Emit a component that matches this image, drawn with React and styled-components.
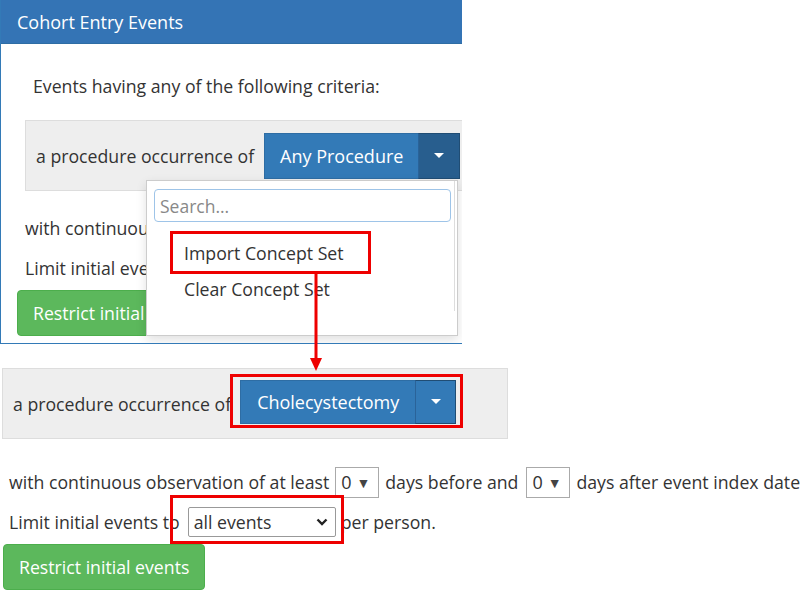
import React from 'react';
import styled, { createGlobalStyle } from 'styled-components';

const GlobalStyle = createGlobalStyle`
  html, body {
    margin: 0;
    padding: 0;
    background: #fff;
  }
  body {
    font-family: "Open Sans", "Noto Sans", sans-serif;
    font-size: 17.7px;
    color: #333;
  }
`;

const Page = styled.div`
  position: relative;
  width: 807px;
  height: 592px;
  overflow: hidden;
`;

const Panel = styled.div`
  position: relative;
  width: 461px;
  height: 343px;
  border: 1px solid #337ab7;
  border-top: none;
  border-right: none;
  overflow: hidden;
`;

const PanelHeader = styled.div`
  height: 44px;
  background: #3474b5;
  border-bottom: 1px solid #2e6da4;
  box-sizing: border-box;
  display: flex;
  align-items: center;
  padding-left: 16px;
  color: #fff;
  font-size: 18px;
`;

const PanelBody = styled.div`
  padding: 30px 0 0 24px;
`;

const Intro = styled.div`
  padding-left: 8px;
  height: 24px;
  line-height: 24px;
  white-space: nowrap;
`;

const Criteria = styled.div`
  display: flex;
  align-items: center;
  gap: ${p => p.$gap}px;
  box-sizing: border-box;
  height: 71px;
  width: ${p => p.$width}px;
  margin-top: ${p => p.$top}px;
  margin-left: ${p => p.$left || 0}px;
  padding-left: ${p => p.$pad}px;
  background: #eee;
  border: 1px solid #ddd;
  white-space: nowrap;
`;

const SplitButton = styled.div`
  position: relative;
  display: flex;
  height: ${p => p.$h}px;
  margin-top: ${p => p.$shift || 0}px;
`;

const MainButton = styled.div`
  display: flex;
  align-items: center;
  justify-content: center;
  width: ${p => p.$w}px;
  background: #337ab7;
  border: 1px solid #2e6da4;
  border-right: none;
  color: #fff;
  font-size: 18px;
`;

const CaretButton = styled.div`
  display: flex;
  align-items: center;
  justify-content: center;
  width: ${p => p.$w}px;
  background: ${p => (p.$open ? '#285e8e' : '#337ab7')};
  border: 1px solid #204d74;
  border-left: 1px solid #2a6399;
`;

const Caret = styled.span`
  width: 0;
  height: 0;
  border-left: 5px solid transparent;
  border-right: 5px solid transparent;
  border-top: 5px solid #fff;
`;

const Line = styled.div`
  height: 24px;
  margin-top: ${p => p.$top}px;
  padding-left: ${p => p.$pad || 0}px;
  white-space: nowrap;
  display: flex;
  align-items: center;
`;

const GreenButton = styled.div`
  display: inline-flex;
  align-items: center;
  justify-content: center;
  box-sizing: border-box;
  height: 46px;
  padding: 0 15px;
  margin-top: ${p => p.$top}px;
  margin-left: ${p => p.$left}px;
  background: #5cb85c;
  border: 1px solid #4cae4c;
  border-radius: 4px;
  color: #fff;
  font-size: 17.7px;
  white-space: nowrap;
`;

const Menu = styled.div`
  position: absolute;
  left: 145px;
  top: 180px;
  width: 312px;
  height: 156px;
  box-sizing: border-box;
  background: #fff;
  border: 1px solid #ccc;
  box-shadow: 0 4px 10px rgba(0, 0, 0, 0.12);
  padding: 8px 6px 0 7px;
`;

const MenuScroll = styled.div`
  position: absolute;
  right: 2px;
  top: 0;
  height: 130px;
  border-right: 1px solid #ddd;
`;

const SearchBox = styled.div`
  height: 33px;
  width: 297px;
  box-sizing: border-box;
  border: 1px solid #9ec4e8;
  border-radius: 4px;
  padding-left: 5px;
  display: flex;
  align-items: center;
  color: #888;
  font-size: 17.5px;
`;

const MenuItem = styled.div`
  height: 36px;
  line-height: 36px;
  margin-top: ${p => p.$top || 0}px;
  padding-left: 30px;
  color: #333;
  white-space: nowrap;
`;

const RedBox = styled.div`
  position: absolute;
  left: ${p => p.$l}px;
  top: ${p => p.$t}px;
  width: ${p => p.$w}px;
  height: ${p => p.$h}px;
  box-sizing: border-box;
  border: 3px solid #ee0000;
  pointer-events: none;
`;

const Arrow = styled.svg`
  position: absolute;
  left: 305px;
  top: 272px;
`;

const Lower = styled.div`
  padding-top: 24px;
`;

const Inline = styled.span`
  position: relative;
  display: inline-flex;
`;

const NumberSelect = styled.span`
  display: inline-flex;
  align-items: center;
  box-sizing: border-box;
  width: 44px;
  height: 31px;
  margin: 0 ${p => p.$mr}px 0 ${p => p.$ml}px;
  padding: 0 5px;
  gap: 5px;
  border: 1px solid #aaa;
  background: #fff;
  font-size: 18px;
`;

const SmallArrow = styled.span`
  font-size: 14px;
  color: #444;
`;

const ModeSelect = styled.span`
  display: inline-flex;
  align-items: center;
  justify-content: space-between;
  box-sizing: border-box;
  width: 148px;
  height: 30px;
  margin: 0 5px 0 8px;
  padding: 0 7px 0 5px;
  border: 1px solid #999;
  border-radius: 2px;
  background: #fff;
`;

const Chevron = () => (
  <svg width="12" height="8" viewBox="0 0 12 8">
    <path d="M1.5 1.5 L6 6 L10.5 1.5" fill="none" stroke="#222" strokeWidth="2.4" />
  </svg>
);

export default function App() {
  return (
    <Page>
      <GlobalStyle />
      <Panel>
        <PanelHeader>Cohort Entry Events</PanelHeader>
        <PanelBody>
          <Intro>Events having any of the following criteria:</Intro>
          <Criteria $width={460} $top={22} $pad={10} $gap={10}>
            <span>a procedure occurrence of</span>
            <SplitButton $h={46}>
              <MainButton $w={153}>Any Procedure</MainButton>
              <CaretButton $w={40} $open>
                <Caret />
              </CaretButton>
            </SplitButton>
          </Criteria>
          <Line $top={25}>with continuous observation of at least</Line>
          <Line $top={16}>Limit initial events to</Line>
          <GreenButton $top={10} $left={-8}>Restrict initial events</GreenButton>
        </PanelBody>
        <Menu>
          <MenuScroll />
          <SearchBox>Search...</SearchBox>
          <MenuItem $top={13}>Import Concept Set</MenuItem>
          <MenuItem>Clear Concept Set</MenuItem>
        </Menu>
        <RedBox $l={169} $t={231} $w={201} $h={43} />
      </Panel>
      <Arrow width="22" height="102" viewBox="0 0 22 102">
        <line x1="11" y1="0" x2="11" y2="88" stroke="#ee0000" strokeWidth="3" />
        <polygon points="5,86 17,86 11,99" fill="#ee0000" />
      </Arrow>
      <Lower>
        <Criteria $width={506} $top={0} $left={2} $pad={10} $gap={9}>
          <span>a procedure occurrence of</span>
          <SplitButton $h={44} $shift={-4}>
            <MainButton $w={174}>Cholecystectomy</MainButton>
            <CaretButton $w={39}>
              <Caret />
            </CaretButton>
            <RedBox $l={-10} $t={-6} $w={233} $h={54} />
          </SplitButton>
        </Criteria>
        <Line $top={31} $pad={9}>
          with continuous observation of at least
          <NumberSelect $ml={6} $mr={6}>0<SmallArrow>▼</SmallArrow></NumberSelect>
          days before and
          <NumberSelect $ml={8} $mr={6}>0<SmallArrow>▼</SmallArrow></NumberSelect>
          days after event index date
        </Line>
        <Line $top={16} $pad={9}>
          Limit initial events to
          <Inline>
            <ModeSelect>
              all events
              <Chevron />
            </ModeSelect>
            <RedBox $l={-10} $t={-12} $w={174} $h={49} />
          </Inline>
          per person.
        </Line>
        <GreenButton $top={10} $left={3}>Restrict initial events</GreenButton>
      </Lower>
    </Page>
  );
}
